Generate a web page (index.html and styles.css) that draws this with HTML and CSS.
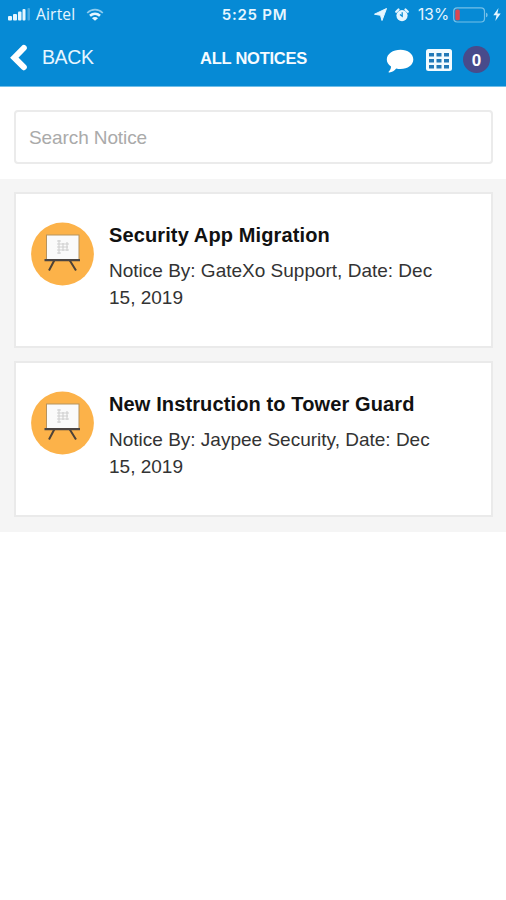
FILE: index.html
```
<!DOCTYPE html>
<html lang="en">
<head>
<meta charset="utf-8">
<title>All Notices</title>
<link rel="stylesheet" href="styles.css">
</head>
<body>
<svg class="defs" width="0" height="0" aria-hidden="true">
  <symbol id="board" viewBox="0 0 64 64">
    <circle cx="31.500" cy="32" r="31.400" fill="#fcb249"/>
    <path d="M23.500 38 18 48.500M38.500 38 45 48.500" stroke="#4d4238" stroke-width="2" fill="none"/>
    <rect x="15.500" y="13" width="32.500" height="24.500" fill="#fafafa" stroke="#b5935f"/>
    <path d="M13.500 38.200H49" stroke="#4b4542" stroke-width="2.200"/>
    <path d="M26 19h4M26 22h12M26 25h11M26 28h12M26 31h4M28 18v14M32 21v8M36 20v9" stroke="#cfcfcf" stroke-width="1.100" fill="none"/>
  </symbol>
</svg>
<header class="top">
  <div class="status">
    <div class="carrier">
      <svg width="24" height="14" viewBox="0 0 24 14" fill="#e6f6ff"><rect x="0" y="8" width="4" height="4.500" rx="1"/><rect x="5" y="6" width="4" height="6.500" rx="1"/><rect x="10" y="3.500" width="3.500" height="9" rx="1"/><rect x="14.500" y="1" width="3" height="11.500" rx="1"/><rect x="19.500" y="0" width="2.500" height="12.500" rx="1" opacity=".3"/></svg>
      <span class="airtel">Airtel</span>
      <svg class="wifi" width="18" height="13" viewBox="0 0 18 13" fill="none" stroke="#e6f6ff"><path d="M1.200 5C5.600.6 12.400.6 16.800 5" stroke-width="1.700" opacity=".6"/><path d="M4 7.800c3-2.700 7-2.700 10 0" stroke-width="2.600"/><path d="M9 12.800 6 10.200c1.600-1.500 4.400-1.500 6 0z" fill="#e6f6ff" stroke="none"/></svg>
    </div>
    <span class="clock">5:25 PM</span>
    <div class="power">
      <svg width="13" height="13" viewBox="0 0 13 13"><path d="M12.500.5 8 12.500 6.500 7.300.5 6.200z" fill="#e6f6ff" stroke="#e6f6ff" stroke-linejoin="round"/></svg>
      <svg class="alarm" width="14" height="14" viewBox="0 0 14 14"><circle cx="7" cy="7.600" r="5.600" fill="#e6f6ff"/><path d="M1.200 3.800 3.500 1.500M12.800 3.800 10.500 1.500" stroke="#e6f6ff" stroke-width="2.200" stroke-linecap="round"/><path d="M7.200 4.300v4L5 6.500" stroke="#068ad5" stroke-width="1.200" fill="none"/></svg>
      <span class="percent">13%</span>
      <svg class="battery" width="36" height="16" viewBox="0 0 36 16"><rect x=".7" y=".8" width="30.800" height="14.200" rx="3.500" fill="none" stroke="#75c0e8" stroke-width="1.200"/><path d="M33 5.700v4.500c2.200-.5 2.200-4 0-4.500z" fill="#75c0e8"/><rect x="2.300" y="2.500" width="4.500" height="10.800" rx="1.500" fill="#dc4750"/></svg>
      <svg class="bolt" width="8" height="13" viewBox="0 0 8 13"><path d="M5.500 0 .3 7.200h3.200L2.300 13 7.700 5.500H4.400z" fill="#e6f6ff"/></svg>
    </div>
  </div>
  <nav class="nav">
    <a class="back"><svg width="18" height="27" viewBox="0 0 18 27"><path d="M14.800 4 5.300 13.700 14.800 23.200" fill="none" stroke="#fff" stroke-width="6" stroke-linecap="round"/></svg><span>BACK</span></a>
    <h1>ALL NOTICES</h1>
    <div class="tools">
      <svg class="chat" width="28" height="25" viewBox="0 0 28 25"><path d="M14.500.8C21.800.8 27.300 5 27.300 10.500S21.800 20 14.500 20c-1.500 0-3-.2-4.300-.6-1.700 2.100-4 3.700-6.900 4.100-.7.100-.9-.6-.5-1 1.400-1.400 2.200-3 2.200-5C2.200 15.700.8 13.200.8 10.500.8 5 7 .8 14.500.8z" fill="#fff"/></svg>
      <svg class="grid" width="26" height="22" viewBox="0 0 26 22"><rect width="26" height="22" rx="2.500" fill="#f2fbff"/><g fill="#2179b8"><path d="M3 4h5v3.500H3zM10.500 4h5v3.500h-5zM18 4h5v3.500h-5zM3 10h5v3.500H3zM10.500 10h5v3.500h-5zM18 10h5v3.500h-5zM3 16h5v3.500H3zM10.500 16h5v3.500h-5zM18 16h5v3.500h-5z"/></g></svg>
      <span class="count">0</span>
    </div>
  </nav>
</header>
<main>
  <div class="search"><input type="text" placeholder="Search Notice" aria-label="Search Notice"></div>
  <section class="list">
    <article class="card">
      <svg class="icon"><use href="#board"/></svg>
      <div class="text">
        <h2>Security App Migration</h2>
        <p>Notice By: GateXo Support, Date: Dec<br>15, 2019</p>
      </div>
    </article>
    <article class="card">
      <svg class="icon"><use href="#board"/></svg>
      <div class="text">
        <h2>New Instruction to Tower Guard</h2>
        <p>Notice By: Jaypee Security, Date: Dec<br>15, 2019</p>
      </div>
    </article>
  </section>
</main>
</body>
</html>
```
FILE: styles.css
```
* { box-sizing: border-box; }
body { margin: 0; background: #fff; font-family: "Liberation Sans", Arial, sans-serif; }
svg { display: block; flex: none; }
.defs { position: absolute; }
h1, h2, p { margin: 0; }
.top { height: 87px; background: #068ad5; border-bottom: 1px solid #70bee8; color: #e6f6ff; }
.status { height: 29px; display: grid; grid-template-columns: 1fr auto 1fr; align-items: center; padding: 0 5px 0 8px; }
.carrier { display: flex; align-items: center; }
.airtel { margin-left: 4px; width: 41px; padding-bottom: 2px; font: 15.500px/20px "Open Sans", sans-serif; letter-spacing: .2px; white-space: nowrap; }
.wifi { margin-left: 9px; }
.clock { font: 600 15px/20px Inter, sans-serif; letter-spacing: .75px; }
.power { display: flex; align-items: center; justify-content: flex-end; }
.alarm { margin-left: 8px; }
.percent { margin-left: 9px; width: 31px; font: 15.500px/20px Inter, sans-serif; white-space: nowrap; }
.battery { margin-left: 4px; }
.bolt { margin-left: 4px; }
.nav { height: 57px; display: grid; grid-template-columns: 1fr auto 1fr; align-items: center; padding: 0 8px 0 9px; }
.back { display: flex; align-items: center; gap: 15px; font-size: 19.500px; letter-spacing: -.4px; }
.nav h1 { font-size: 16.500px; line-height: 20px; letter-spacing: -.25px; color: #f5fbff; }
.tools { display: flex; align-items: center; justify-content: flex-end; padding: 4px 8px 0 0; }
.chat { margin-top: 4px; }
.grid { margin-left: 12px; }
.count { margin-left: 11px; width: 27px; height: 27px; border-radius: 50%; background: #484b8b; color: #fff; font-weight: bold; font-size: 17px; line-height: 29px; text-align: center; }
.search { height: 92px; padding: 23px 13px 0 14px; }
.search input { display: block; width: 100%; height: 54px; border: 2px solid #ebebeb; border-radius: 4px; padding: 1px 13px 0; font: 19px "Liberation Sans", Arial, sans-serif; letter-spacing: -.1px; background: #fff; }
.search input::placeholder { color: #aaa; opacity: 1; }
.list { height: 353px; background: #f5f5f5; padding: 13px 13px 15px 14px; display: flex; flex-direction: column; gap: 13px; }
.card { height: 156px; background: #fff; border: 2px solid #eaeaea; display: flex; padding: 28px 15px; }
.icon { width: 64px; height: 64px; }
.text { margin-left: 14px; margin-top: -1px; white-space: nowrap; }
.card h2 { font-size: 20px; line-height: 28px; letter-spacing: .12px; color: #111; }
.card p { margin-top: 8px; font-size: 19px; line-height: 27px; color: #333; }
```
